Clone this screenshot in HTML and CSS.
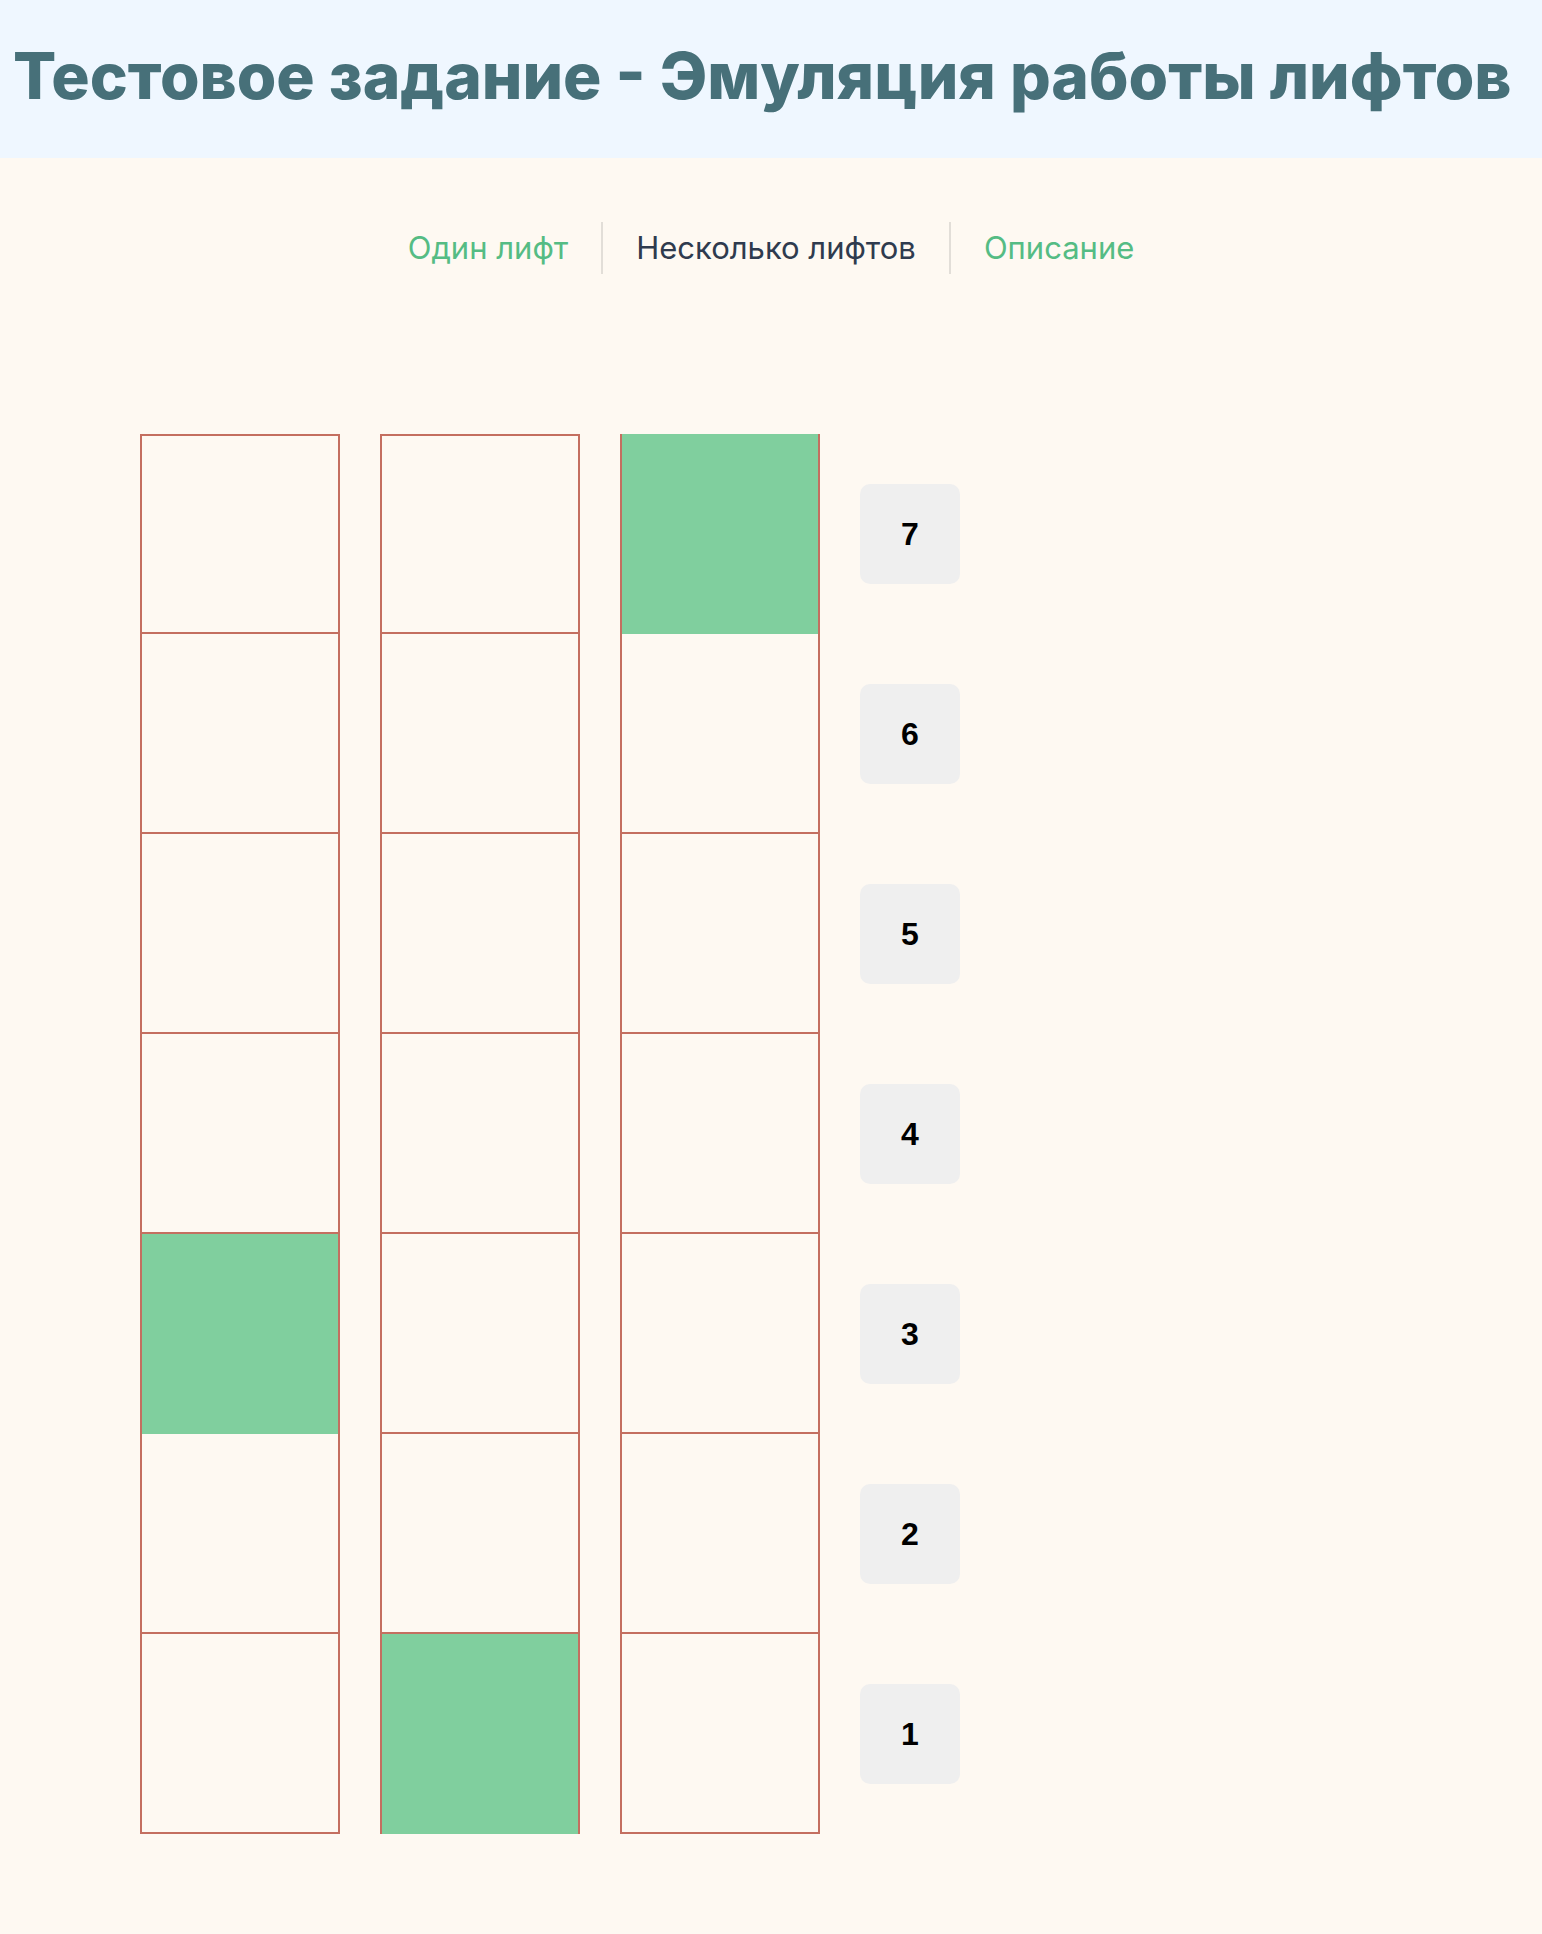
FILE: index.html
```html
<!DOCTYPE html>
<html lang="ru">
<head>
<meta charset="utf-8">
<title>Эмуляция работы лифтов</title>
<link rel="stylesheet" href="styles.css">
</head>
<body>
<header class="header">
  <h1 class="title">Тестовое задание - Эмуляция работы лифтов</h1>
</header>
<main class="main">
  <nav class="nav">
    <a class="nav-item nav-link" href="#">Один лифт</a>
    <span class="nav-item nav-current">Несколько лифтов</span>
    <a class="nav-item nav-link" href="#">Описание</a>
  </nav>
  <section class="building">
    <div class="shaft">
      <div class="cell"></div><div class="cell"></div><div class="cell"></div><div class="cell"></div><div class="cell"></div><div class="cell"></div><div class="cell"></div>
      <div class="cab" style="top: 800px"></div>
    </div>
    <div class="shaft">
      <div class="cell"></div><div class="cell"></div><div class="cell"></div><div class="cell"></div><div class="cell"></div><div class="cell"></div><div class="cell"></div>
      <div class="cab" style="top: 1200px"></div>
    </div>
    <div class="shaft">
      <div class="cell"></div><div class="cell"></div><div class="cell"></div><div class="cell"></div><div class="cell"></div><div class="cell"></div><div class="cell"></div>
      <div class="cab" style="top: 0px"></div>
    </div>
    <div class="floors">
      <div class="floor"><button class="floor-btn">7</button></div>
      <div class="floor"><button class="floor-btn">6</button></div>
      <div class="floor"><button class="floor-btn">5</button></div>
      <div class="floor"><button class="floor-btn">4</button></div>
      <div class="floor"><button class="floor-btn">3</button></div>
      <div class="floor"><button class="floor-btn">2</button></div>
      <div class="floor"><button class="floor-btn">1</button></div>
    </div>
  </section>
</main>
</body>
</html>
```
FILE: styles.css
```css
* { box-sizing: border-box; }

html, body {
  margin: 0;
  background: #fef9f2;
}

body {
  font-family: Inter, "Noto Sans", sans-serif;
  min-height: 1934px;
}

.header {
  background: #eff7ff;
  height: 158px;
  display: flex;
  align-items: center;
  padding: 0 0 8px 13px;
}

.title {
  margin: 0;
  font-family: Inter, "Noto Sans", sans-serif;
  font-weight: 800;
  font-size: 64px;
  color: #477079;
  white-space: nowrap;
}

.main {
  padding-top: 64px;
}

.nav {
  display: flex;
  justify-content: center;
}

.nav-item {
  display: block;
  height: 52px;
  line-height: 52px;
  font-size: 31px;
  padding: 0 33px;
  text-decoration: none;
}

.nav-item + .nav-item {
  border-left: 2px solid #e2ded8;
}

.nav-link { color: #55bc84; }
.nav-current { color: #2f3b4e; }

.building {
  display: flex;
  gap: 40px;
  margin-top: 160px;
  padding-left: 140px;
  padding-bottom: 100px;
}

.shaft {
  position: relative;
  width: 200px;
  display: flex;
  flex-direction: column;
}

.cell {
  height: 200px;
  border: 2px solid #c46f60;
  border-top: none;
}

.cell:first-child {
  border-top: 2px solid #c46f60;
}

.cab {
  position: absolute;
  left: 2px;
  right: 2px;
  height: 200px;
  background: #80cf9e;
}

.floors {
  display: flex;
  flex-direction: column;
}

.floor {
  height: 200px;
  display: flex;
  align-items: center;
}

.floor-btn {
  width: 100px;
  height: 100px;
  border: none;
  border-radius: 10px;
  background: #efefef;
  font-family: "Liberation Sans", Arial, sans-serif;
  font-weight: 700;
  font-size: 32px;
  color: #000;
  padding: 0;
}
```
